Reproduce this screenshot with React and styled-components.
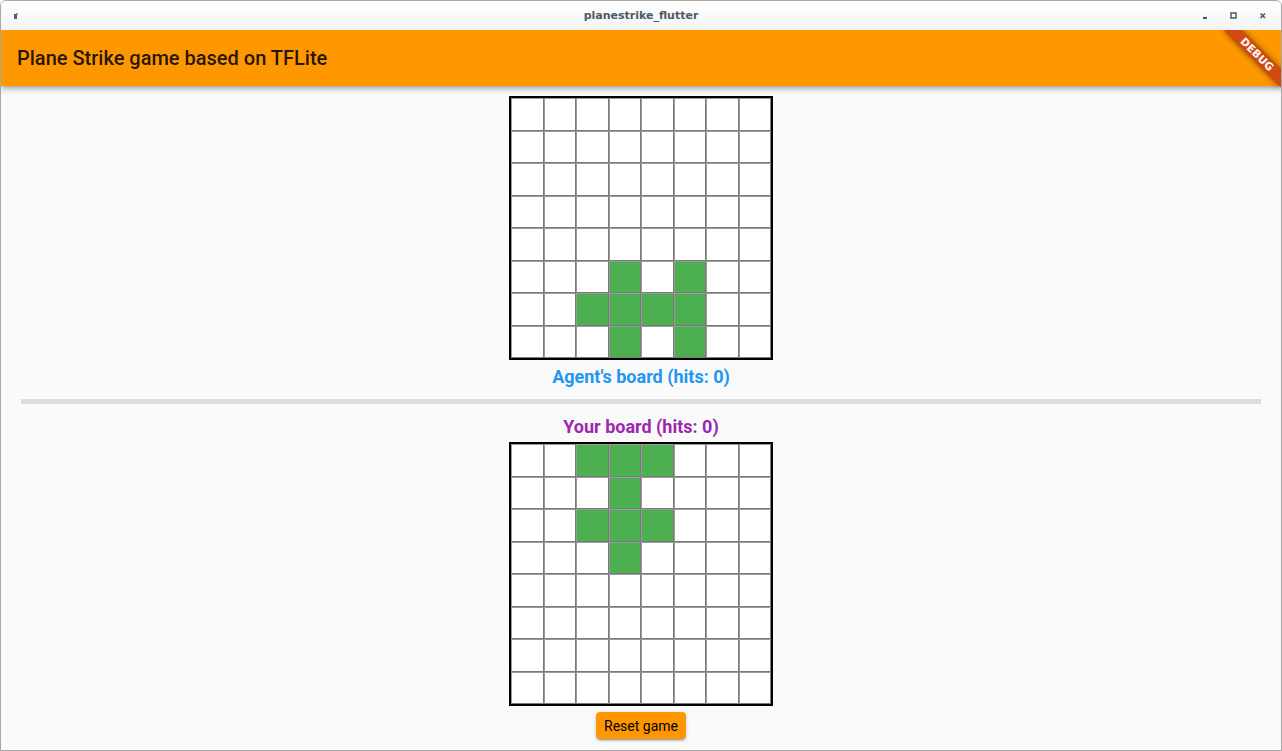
import React from "react";
import styled, { createGlobalStyle } from "styled-components";

const GlobalStyle = createGlobalStyle`
  html, body {
    margin: 0;
    padding: 0;
    background: #ffffff;
  }
  * {
    box-sizing: border-box;
  }
`;

const Window = styled.div`
  width: 1282px;
  height: 751px;
  display: flex;
  flex-direction: column;
  border: 1px solid #a8a8a8;
  border-radius: 6px 6px 0 0;
  overflow: hidden;
  background: #fafafa;
`;

const TitleBar = styled.div`
  height: 29px;
  flex: none;
  display: flex;
  align-items: center;
  justify-content: space-between;
  padding: 0 8px 0 12px;
  background: linear-gradient(#ffffff, #f3f3f3);
  position: relative;
`;

const WindowTitle = styled.div`
  position: absolute;
  left: 0;
  right: 0;
  text-align: center;
  font-family: "DejaVu Sans", sans-serif;
  font-weight: bold;
  font-size: 11px;
  color: #4b5965;
  pointer-events: none;
`;

const Controls = styled.div`
  display: flex;
  gap: 9px;
`;

const ControlButton = styled.div`
  width: 20px;
  height: 20px;
  display: flex;
  align-items: center;
  justify-content: center;
`;

const AppArea = styled.div`
  flex: 1;
  position: relative;
  overflow: hidden;
  display: flex;
  flex-direction: column;
`;

const AppBar = styled.header`
  height: 56px;
  flex: none;
  background: #ff9800;
  display: flex;
  align-items: center;
  padding-left: 16px;
  box-shadow: 0 2px 4px -1px rgba(0, 0, 0, 0.2), 0 4px 5px 0 rgba(0, 0, 0, 0.14),
    0 1px 10px 0 rgba(0, 0, 0, 0.12);
  position: relative;
  z-index: 1;
`;

const AppTitle = styled.h1`
  margin: 0;
  font-family: Roboto, "Liberation Sans", sans-serif;
  font-size: 20px;
  font-weight: 500;
  color: rgba(0, 0, 0, 0.87);
`;

const Content = styled.main`
  flex: 1;
  display: flex;
  flex-direction: column;
  align-items: center;
  padding-top: 10px;
`;

const Board = styled.div`
  width: 264px;
  height: 264px;
  border: 2px solid #000;
  display: grid;
  grid-template-columns: repeat(8, 1fr);
  grid-template-rows: repeat(8, 1fr);
  background: #fff;
`;

const Cell = styled.div`
  border: 1px solid #7a7a7a;
  border-top-color: #9a9a9a;
  border-left-color: #9a9a9a;
  background: ${(p) => (p.$plane ? "#4caf50" : "#ffffff")};
`;

const BoardLabel = styled.div`
  font-family: Roboto, "Liberation Sans", sans-serif;
  font-size: 18px;
  font-weight: bold;
  line-height: 21px;
  color: ${(p) => p.$color};
  margin: ${(p) => p.$margin};
`;

const Divider = styled.div`
  align-self: stretch;
  height: 5px;
  margin: 12px 20px 0;
  background: #dcdcdc;
`;

const ResetButton = styled.button`
  margin-top: 6px;
  height: 27px;
  width: 90px;
  padding: 0;
  border: none;
  border-radius: 4px;
  background: #ff9800;
  color: #000;
  font-family: Roboto, "Liberation Sans", sans-serif;
  font-size: 14px;
  font-weight: 400;
  box-shadow: 0 3px 1px -2px rgba(0, 0, 0, 0.2), 0 2px 2px 0 rgba(0, 0, 0, 0.14),
    0 1px 5px 0 rgba(0, 0, 0, 0.12);
  cursor: pointer;
`;

const DebugBanner = styled.div`
  position: absolute;
  top: 24px;
  right: -16px;
  width: 80px;
  height: 13px;
  margin-top: -6px;
  transform: rotate(45deg);
  background: rgba(183, 28, 28, 0.63);
  box-shadow: 0 0 6px rgba(0, 0, 0, 0.5);
  color: #fff;
  font-family: "DejaVu Sans", Roboto, sans-serif;
  font-weight: 900;
  font-size: 10.5px;
  line-height: 13px;
  text-align: center;
  letter-spacing: 0.2px;
  z-index: 2;
`;

const agentPlane = ["5-3", "5-5", "6-2", "6-3", "6-4", "6-5", "7-3", "7-5"];
const playerPlane = ["0-2", "0-3", "0-4", "1-3", "2-2", "2-3", "2-4", "3-3"];

function GameBoard({ plane }) {
  const cells = [];
  for (let r = 0; r < 8; r++) {
    for (let c = 0; c < 8; c++) {
      cells.push(<Cell key={`${r}-${c}`} $plane={plane.includes(`${r}-${c}`)} />);
    }
  }
  return <Board>{cells}</Board>;
}

function App() {
  return (
    <>
      <GlobalStyle />
      <Window>
        <TitleBar>
          <svg width="6" height="8" viewBox="0 0 6 8">
            <rect x="1" y="2" width="3" height="5" fill="#56606a" />
            <rect x="3" y="1" width="2" height="2" fill="#8a949c" />
          </svg>
          <WindowTitle>planestrike_flutter</WindowTitle>
          <Controls>
            <ControlButton>
              <svg width="8" height="8" viewBox="0 0 8 8">
                <rect x="2" y="5" width="4" height="2" fill="#4b5965" />
              </svg>
            </ControlButton>
            <ControlButton>
              <svg width="8" height="8" viewBox="0 0 8 8">
                <rect x="1" y="1" width="5" height="5" fill="none" stroke="#4b5965" strokeWidth="1.5" />
              </svg>
            </ControlButton>
            <ControlButton>
              <svg width="8" height="8" viewBox="0 0 8 8">
                <path d="M1.5 1.5 L6 6 M6 1.5 L1.5 6" stroke="#4b5965" strokeWidth="1.6" />
              </svg>
            </ControlButton>
          </Controls>
        </TitleBar>
        <AppArea>
          <AppBar>
            <AppTitle>Plane Strike game based on TFLite</AppTitle>
          </AppBar>
          <DebugBanner>DEBUG</DebugBanner>
          <Content>
            <GameBoard plane={agentPlane} />
            <BoardLabel $color="#2196f3" $margin="6px 0 0">
              Agent's board (hits: 0)
            </BoardLabel>
            <Divider />
            <BoardLabel $color="#9c27b0" $margin="12px 0 5px">
              Your board (hits: 0)
            </BoardLabel>
            <GameBoard plane={playerPlane} />
            <ResetButton>Reset game</ResetButton>
          </Content>
        </AppArea>
      </Window>
    </>
  );
}

export default App;
